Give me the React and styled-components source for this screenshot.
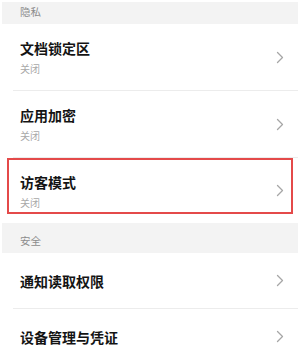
import styled, { createGlobalStyle } from "styled-components";

const GlobalStyle = createGlobalStyle`
	body {
		margin: 0;
		background: #fff;
		font-family: "Noto Sans CJK SC", "Noto Sans", sans-serif;
	}
`;

const sections = [
	{
		title: "隐私",
		height: 22,
		items: [
			{ title: "文档锁定区", sub: "关闭", height: 66 },
			{ title: "应用加密", sub: "关闭", height: 66 },
			{ title: "访客模式", sub: "关闭", height: 65, marked: true, noDivider: true },
		],
	},
	{
		title: "安全",
		height: 30,
		items: [
			{ title: "通知读取权限", height: 55 },
			{ title: "设备管理与凭证", height: 55 },
		],
	},
];

const Chevron = () => (
	<svg width="8" height="13" viewBox="0 0 8 13" fill="none">
		<polyline
			points="1.5,1.5 6.5,6.5 1.5,11.5"
			stroke="#a6a6a6"
			strokeWidth="1.3"
			strokeLinecap="round"
			strokeLinejoin="round"
		/>
	</svg>
);

export default function App() {
	return (
		<>
			<GlobalStyle />
			<Page>
				{sections.map((section) => (
					<div key={section.title}>
						<SectionHeader $height={section.height}>{section.title}</SectionHeader>
						{section.items.map((item, index) => (
							<div key={item.title}>
								{index > 0 && !section.items[index - 1].noDivider ? <Divider /> : null}
								<Row $height={item.height}>
									<TextCol>
										<Title>{item.title}</Title>
										{item.sub ? <Sub>{item.sub}</Sub> : null}
									</TextCol>
									<Chevron />
									{item.marked ? <Highlight /> : null}
								</Row>
							</div>
						))}
					</div>
				))}
			</Page>
		</>
	);
}

const Page = styled.div`
	width: 300px;
	height: 359px;
	overflow: hidden;
	padding-top: 2px;
	box-sizing: border-box;
	background: #fff;
`;

const SectionHeader = styled.div`
	display: flex;
	align-items: flex-end;
	height: ${(p) => p.$height}px;
	box-sizing: border-box;
	margin: 0 2px;
	padding: 0 0 5px 18px;
	background: #f3f3f3;
	color: #8c8c8c;
	font-size: 10.5px;
	line-height: 14px;
`;

const Row = styled.div`
	position: relative;
	display: flex;
	align-items: center;
	justify-content: space-between;
	height: ${(p) => p.$height}px;
	padding: 0 16px 0 20px;
	box-sizing: border-box;
`;

const TextCol = styled.div`
	display: flex;
	flex-direction: column;
	gap: 4px;
`;

const Title = styled.div`
	font-size: 14px;
	line-height: 20px;
	font-weight: 700;
	color: #141414;
`;

const Sub = styled.div`
	font-size: 10px;
	line-height: 14px;
	color: #a8a8a8;
`;

const Divider = styled.div`
	height: 1px;
	margin: 0 2px 0 13px;
	background: #ececec;
`;

const Highlight = styled.div`
	position: absolute;
	top: 0;
	left: 7px;
	right: 7px;
	height: 56px;
	border: 2px solid #e44a4a;
	box-sizing: border-box;
	pointer-events: none;
`;
